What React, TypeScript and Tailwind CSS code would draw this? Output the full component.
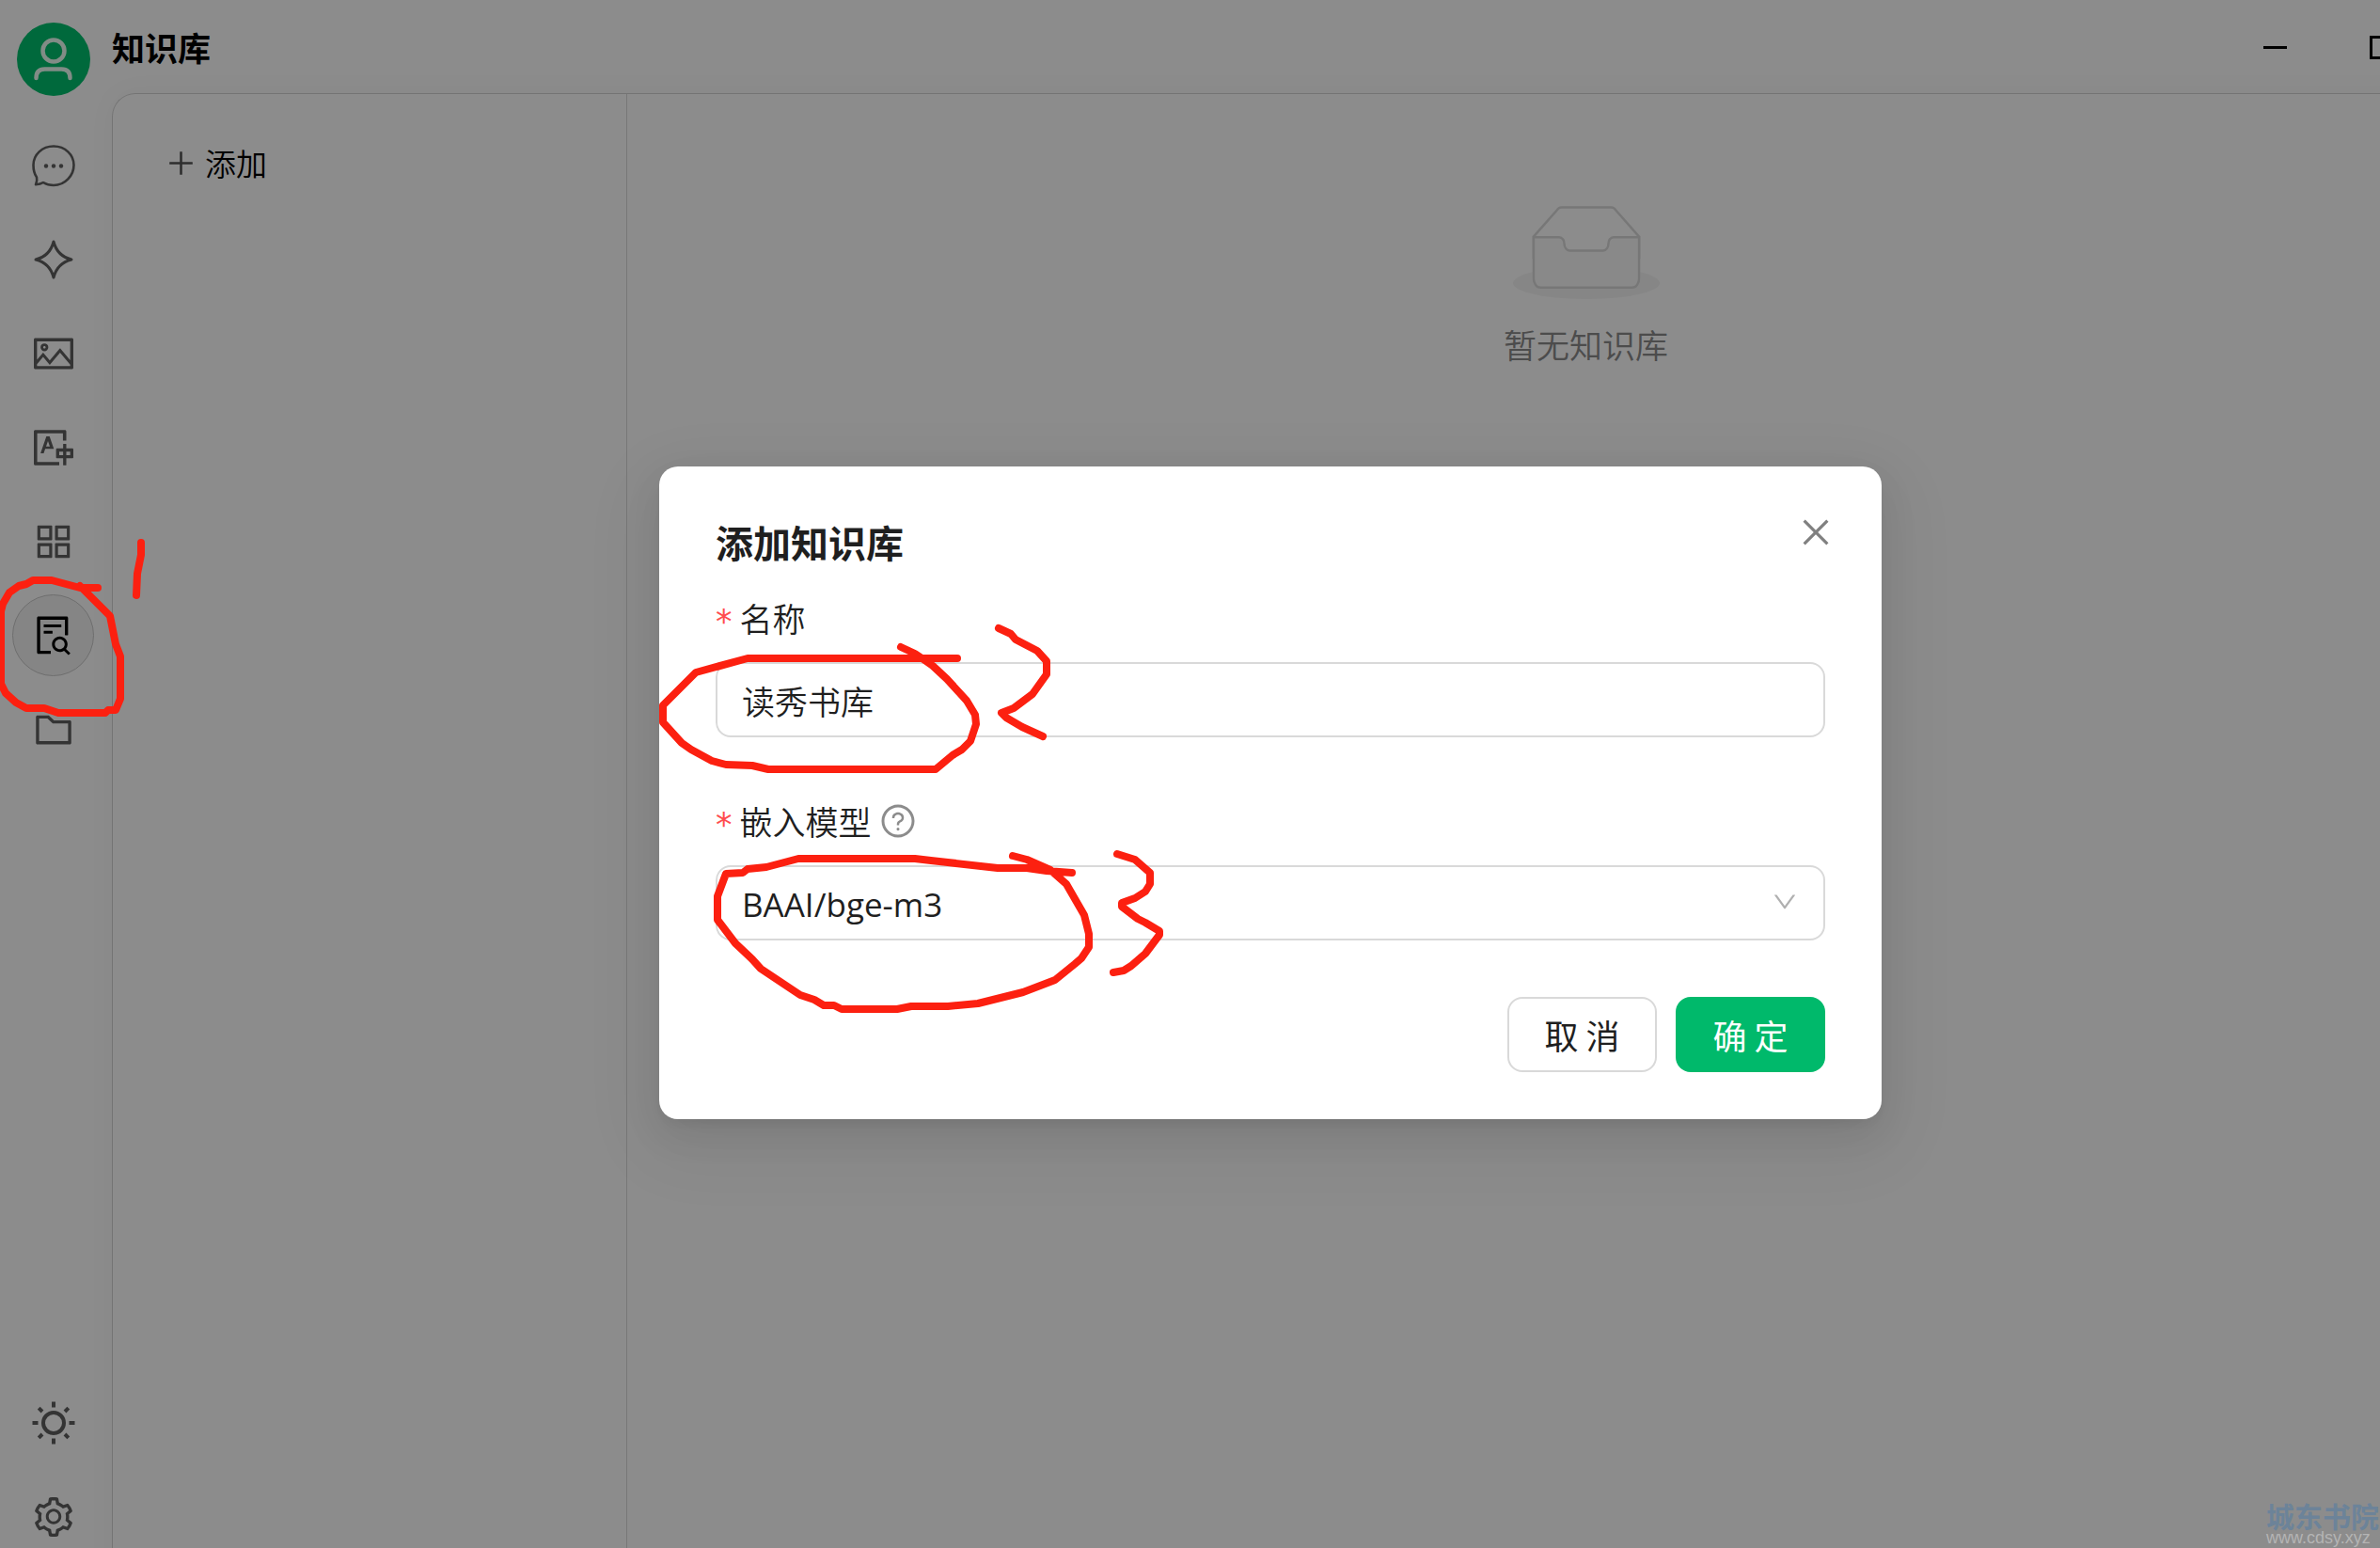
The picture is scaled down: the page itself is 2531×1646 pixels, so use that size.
import { useState } from "react";
import type { ReactNode } from "react";
import {
  AiOutlineAppstore,
  AiOutlineClose,
  AiOutlineDown,
  AiOutlineFileSearch,
  AiOutlineFolder,
  AiOutlinePicture,
  AiOutlinePlus,
  AiOutlineQuestionCircle,
  AiOutlineSetting,
  AiOutlineTranslation,
} from "react-icons/ai";

const ChatIcon = () => (
  <svg viewBox="0 0 48 48" className="size-12" fill="none" stroke="currentColor" strokeWidth="2.6" strokeLinejoin="round">
    <path d="M24 3.500c12.200 0 21.500 8.900 21.500 20S36.200 45 24 45c-4.200 0-7.800-1-11-3-1.800 1.200-4.500 2-8 2.200 1.300-2.700 1.600-5.200 1-7.700C3.500 33 2.500 28 2.500 23.500 2.500 12.400 11.800 3.500 24 3.500z" />
    <g fill="currentColor" stroke="none">
      <circle cx="16" cy="24.500" r="2.200" />
      <circle cx="24" cy="24.500" r="2.200" />
      <circle cx="32" cy="24.500" r="2.200" />
    </g>
  </svg>
);

const SparkleIcon = () => (
  <svg viewBox="0 0 48 48" className="size-12" fill="none" stroke="currentColor" strokeWidth="3" strokeLinejoin="round">
    <path d="M24 5c2.500 9.500 9 16.500 19 19-10 2.500-16.500 9.500-19 19-2.500-9.500-9-16.500-19-19 10-2.500 16.500-9.500 19-19z" />
  </svg>
);

const SunIcon = () => (
  <svg viewBox="0 0 48 48" className="size-12" fill="none" stroke="currentColor" strokeWidth="4">
    <circle cx="24" cy="24" r="11" />
    <path d="M24 1.500v6M24 40.500v6M1.500 24h6M40.500 24h6M8.200 8.200l3.800 3.800M36 36l3.800 3.800M8.200 39.800 12 36M36 12l3.800-3.800" />
  </svg>
);

const EmptyImage = () => (
  <svg viewBox="0 0 64 41" className="h-[100px] w-[156px]" fill="none">
    <g transform="translate(0 1)">
      <ellipse cx="32" cy="33" rx="32" ry="7" fill="#f5f5f5" />
      <g stroke="#d9d9d9">
        <path d="M55 12.760L44.854 1.258C44.367.474 43.656 0 42.907 0H21.093c-.749 0-1.460.474-1.947 1.257L9 12.761V22h46v-9.240z" />
        <path
          fill="#fafafa"
          d="M41.613 15.931c0-1.605.994-2.930 2.227-2.931H55v18.137C55 33.260 53.680 35 52.050 35h-40.100C10.320 35 9 33.259 9 31.137V13h11.160c1.233 0 2.227 1.323 2.227 2.928v.022c0 1.605 1.005 2.901 2.237 2.901h14.752c1.232 0 2.237-1.308 2.237-2.913v-.007z"
        />
      </g>
    </g>
  </svg>
);

const NavButton = ({ label, active, children }: { label: string; active?: boolean; children: ReactNode }) => (
  <button
    aria-label={label}
    className={
      active
        ? "flex size-[87px] items-center justify-center rounded-full border border-[#c8c8c8] bg-[#f3f3f3] text-black"
        : "flex size-[87px] items-center justify-center rounded-full text-[#606060]"
    }
  >
    {children}
  </button>
);

const Sidebar = () => (
  <aside className="flex w-[119px] shrink-0 flex-col items-center pt-6 pr-1.5 pb-[30px]">
    <button aria-label="用户" className="flex size-[78px] items-center justify-center rounded-full bg-[#00bf6d]">
      <svg viewBox="0 0 78 78" className="size-full" fill="none" stroke="#ecfff5" strokeWidth="4.500" strokeLinecap="round">
        <circle cx="39" cy="30" r="11.500" />
        <path d="M20.500 59c0-6.500 3.500-9.500 9-9.500h18c5.500 0 9 3 9 9.500" />
      </svg>
    </button>
    <nav className="mt-[30px] flex flex-col gap-[13px]">
      <NavButton label="聊天"><ChatIcon /></NavButton>
      <NavButton label="智能体"><SparkleIcon /></NavButton>
      <NavButton label="绘画"><AiOutlinePicture className="size-12" /></NavButton>
      <NavButton label="翻译"><AiOutlineTranslation className="size-12" /></NavButton>
      <NavButton label="小程序"><AiOutlineAppstore className="size-12" /></NavButton>
      <NavButton label="知识库" active><AiOutlineFileSearch className="size-12" /></NavButton>
      <NavButton label="文件"><AiOutlineFolder className="size-12" /></NavButton>
    </nav>
    <div className="mt-auto flex flex-col gap-[13px]">
      <NavButton label="主题"><SunIcon /></NavButton>
      <NavButton label="设置"><AiOutlineSetting className="size-12" /></NavButton>
    </div>
  </aside>
);

const TitleBar = () => (
  <header className="flex h-[99px] shrink-0 items-center justify-between">
    <h1 className="text-[35px] leading-10 font-bold text-black">知识库</h1>
    <div className="flex h-full pt-0.5 text-black">
      <button aria-label="最小化" className="flex w-[113px] items-center justify-center">
        <span className="h-[3px] w-[25px] bg-black" />
      </button>
      <button aria-label="最大化" className="flex w-[113px] items-center justify-center">
        <span className="size-[25px] border-3 border-black" />
      </button>
      <button aria-label="关闭窗口" className="flex w-[113px] items-center justify-center">
        <AiOutlineClose className="size-8" />
      </button>
    </div>
  </header>
);

const RequiredLabel = ({ htmlFor, children }: { htmlFor: string; children: ReactNode }) => (
  <label htmlFor={htmlFor} className="mb-[18px] flex h-[58px] items-center text-[35px] font-[350]">
    <span className="mr-2 pt-2 font-['DejaVu_Sans'] font-normal text-[#ff4d4f]">*</span>
    {children}
  </label>
);

const AddKnowledgeDialog = () => {
  const [name, setName] = useState("读秀书库");
  const [model, setModel] = useState("BAAI/bge-m3");

  return (
    <form
      role="dialog"
      aria-labelledby="dialog-title"
      onSubmit={(e) => e.preventDefault()}
      className="relative w-[1300px] rounded-[20px] bg-white px-[60px] py-[50px] text-[#1f1f1f] shadow-[0_15px_40px_rgba(0,0,0,0.08),0_8px_15px_-10px_rgba(0,0,0,0.12),0_23px_70px_20px_rgba(0,0,0,0.05)]"
    >
      <h2 id="dialog-title" className="mb-[22px] text-[40px] leading-[60px] font-bold">添加知识库</h2>
      <button type="button" aria-label="关闭" className="absolute top-[50px] right-[50px] text-[#808080]">
        <AiOutlineClose className="size-10" />
      </button>

      <RequiredLabel htmlFor="name">名称</RequiredLabel>
      <input
        id="name"
        type="text"
        value={name}
        onChange={(e) => setName(e.target.value)}
        className="mb-[60px] h-20 w-full rounded-2xl border-2 border-[#d9d9d9] px-[26px] text-[35px] font-[350] outline-none"
      />

      <RequiredLabel htmlFor="model">
        嵌入模型
        <AiOutlineQuestionCircle className="ml-2 size-10 text-[#8c8c8c]" />
      </RequiredLabel>
      <div className="relative">
        <select
          id="model"
          value={model}
          onChange={(e) => setModel(e.target.value)}
          className="h-20 w-full appearance-none rounded-2xl border-2 border-[#d9d9d9] bg-white px-[26px] pt-1 font-['Open_Sans'] text-[35px] outline-none"
        >
          <option value="BAAI/bge-m3">BAAI/bge-m3</option>
        </select>
        <AiOutlineDown className="pointer-events-none absolute top-6 right-7 size-[30px] text-[#b0b0b0]" />
      </div>

      <div className="mt-[60px] flex justify-end gap-5 text-[36px]">
        <button type="button" className="h-20 w-[159px] rounded-2xl border-2 border-[#d9d9d9] bg-white">取 消</button>
        <button type="submit" className="h-20 w-[159px] rounded-2xl bg-[#00b96b] text-white">确 定</button>
      </div>
    </form>
  );
};

// Hand-drawn step marks, laid over the whole window
const StepMarks = () => (
  <svg
    viewBox="0 0 2531 1646"
    className="pointer-events-none absolute top-0 left-0 h-[1646px] w-[2531px] max-w-none"
    fill="none"
    stroke="#fc2010"
    strokeWidth="8"
    strokeLinecap="round"
    strokeLinejoin="round"
  >
    <path d="M150 577V590L146 610L145 633" />
    <path d="M104 625H85L70 621L55 617H35L28 621L20 623L10 630L3 642L1 650V727L6 737L17 747L28 753H47L62 758H112L115 755L123 755L128 743V698L123 685L120 670L117 655L110 648L85 623" />
    <path d="M1018 700H795L740 715L705 750V768L725 790L735 797L757 809L772 813L800 814L817 818H995L1013 803L1023 797L1032 788L1038 770L1037 760L1028 745L1007 722L992 708L982 701L973 695L958 688" />
    <path d="M1062 668L1075 674L1080 680L1103 692L1113 703V717L1098 738L1078 753L1065 758L1070 763L1087 773L1109 783" />
    <path d="M1140 928L1113 926L1092 923H1061L1008 917L990 915L973 913H849L815 922L795 924L790 928L772 929L763 953V978L782 1003L800 1020L809 1030L851 1058L866 1063L876 1069H887L895 1073H954L969 1070H1008L1040 1067L1088 1055L1122 1042L1143 1025L1150 1019L1158 1007V993L1153 973L1134 940L1117 925L1092 914L1077 910" />
    <path d="M1188 908L1207 914L1223 928V940L1218 948L1207 955L1193 960V964L1210 977L1218 981L1233 990V994L1218 1014L1203 1027L1195 1032L1184 1034" />
  </svg>
);

export default function App() {
  return (
    <div className="relative h-screen overflow-hidden bg-white font-['Noto_Sans_CJK_SC',sans-serif]">
      {/* the window runs past the right and bottom edges of the screen */}
      <div className="relative flex h-[calc(100vh+40px)] w-[calc(100%+171px)]">
        <Sidebar />
        <div className="flex flex-1 flex-col">
          <TitleBar />
          <main className="flex flex-1 rounded-tl-[25px] border-t border-l border-[#d4d4d4] shadow-[0_0_30px_rgba(0,0,0,0.04)]">
            <section className="w-[547px] border-r border-[#d9d9d9] px-[55px] py-12">
              <button className="flex h-[50px] items-center gap-2 text-[33px] leading-[50px] font-[350] text-black">
                <AiOutlinePlus className="size-[35px] text-[#555]" />
                添加
              </button>
            </section>
            <section className="flex flex-1 flex-col items-center pt-[118px] pl-1">
              <EmptyImage />
              <p className="mt-5 text-[35px] leading-[56px] font-[350] text-[#8a8a8a]">暂无知识库</p>
            </section>
          </main>
        </div>
        <div className="absolute inset-0 flex items-center justify-center bg-black/45">
          <AddKnowledgeDialog />
        </div>
      </div>
      <StepMarks />
      <div className="pointer-events-none absolute right-0 bottom-0 w-[121px] whitespace-nowrap">
        <p className="text-[30px] leading-[26px] font-bold text-[#6c8399]">城东书院</p>
        <p className="font-['Liberation_Sans'] text-lg leading-[22px] text-[#b4b4b4]">www.cdsy.xyz</p>
      </div>
    </div>
  );
}
